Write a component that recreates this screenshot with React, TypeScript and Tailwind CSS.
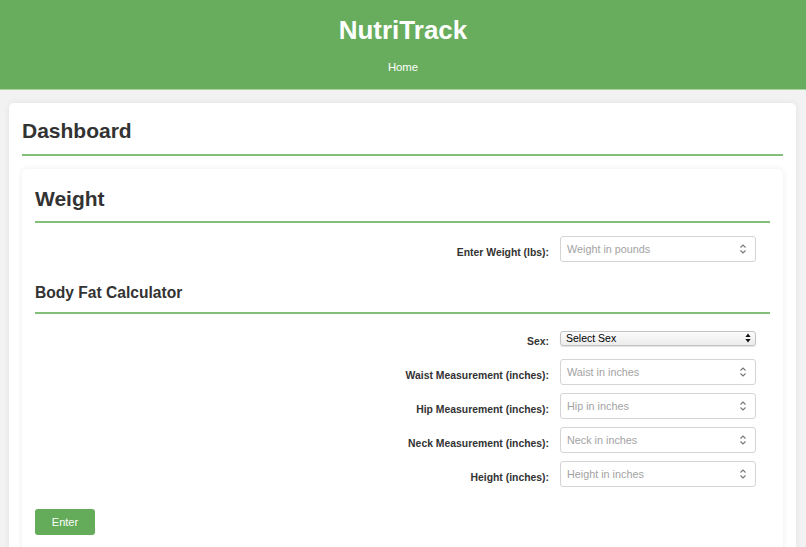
import React from 'react';

const Spinner: React.FC = () => (
    <svg width="8" height="12" viewBox="0 0 8 12" className="shrink-0">
        <path d="M1.5 4.5 L4 2 L6.5 4.5" fill="none" stroke="#777" strokeWidth="1.1" />
        <path d="M1.5 7.5 L4 10 L6.5 7.5" fill="none" stroke="#777" strokeWidth="1.1" />
    </svg>
);

const NumberField: React.FC<{ label: string; placeholder: string }> = ({ label, placeholder }) => (
    <div className="flex justify-end items-center gap-[11px] pr-[14px]">
        <label className="pt-[8px] text-[10.4px] font-bold text-[#333]">{label}</label>
        <div className="w-[196px] h-[26px] flex items-center border border-[#d4d4d4] rounded-[3px] bg-white pl-[6px] pr-[8px]">
            <input
                type="text"
                placeholder={placeholder}
                className="flex-1 min-w-0 bg-transparent outline-none text-[10.8px] text-[#333] placeholder:text-[#a3a3a3]"
            />
            <Spinner />
        </div>
    </div>
);

const SexField: React.FC = () => (
    <div className="flex justify-end items-center gap-[11px] pr-[14px] h-[26px]">
        <label className="pt-[8px] text-[10.4px] font-bold text-[#333]">Sex:</label>
        <div className="w-[196px] h-[15px] flex items-center justify-between border border-[#c3c3c3] rounded-[3px] bg-gradient-to-b from-[#fbfbfb] to-[#ececec] shadow-[0_1px_1px_rgba(0,0,0,0.12)] pl-[5px] pr-[4px]">
            <span className="text-[10.5px] leading-none text-black">Select Sex</span>
            <svg width="6" height="10" viewBox="0 0 6 10">
                <path d="M3 0.5 L5.6 4 H0.4 Z" fill="#111" />
                <path d="M3 9.5 L5.6 6 H0.4 Z" fill="#111" />
            </svg>
        </div>
    </div>
);

const App: React.FC = () => {
    return (
        <div className="min-h-screen bg-[#f2f2f2] font-['Liberation_Sans',Arial,sans-serif]">
            <header className="h-[90px] bg-[#68ad5d] border-b border-[#a8d2a0] text-center text-white">
                <h1 className="pt-[15px] text-[26px] leading-[30px] font-bold">NutriTrack</h1>
                <nav className="mt-[16px] text-[11.3px] leading-[13px]">Home</nav>
            </header>
            <main className="ml-[9px] mr-[10px] mt-[13px] bg-white rounded-[5px] shadow-[0_0_6px_rgba(0,0,0,0.07)] px-[13px] pt-[16px] pb-[20px]">
                <h2 className="text-[21px] leading-[24px] font-bold text-[#333] pb-[11px] border-b-2 border-[#84bf7a]">Dashboard</h2>
                <section className="mt-[13px] rounded-[5px] shadow-[0_0_6px_rgba(0,0,0,0.08)] px-[13px] pt-[18px] pb-[20px]">
                    <h3 className="text-[21px] leading-[24px] font-bold text-[#333] pb-[10px] border-b-2 border-[#84bf7a]">Weight</h3>
                    <div className="mt-[13px]">
                        <NumberField label="Enter Weight (lbs):" placeholder="Weight in pounds" />
                    </div>
                    <h4 className="mt-[22px] text-[15.6px] leading-[18px] font-bold text-[#333] pb-[10px] border-b-2 border-[#84bf7a]">Body Fat Calculator</h4>
                    <div className="mt-[11px] flex flex-col gap-[8px]">
                        <SexField />
                        <NumberField label="Waist Measurement (inches):" placeholder="Waist in inches" />
                        <NumberField label="Hip Measurement (inches):" placeholder="Hip in inches" />
                        <NumberField label="Neck Measurement (inches):" placeholder="Neck in inches" />
                        <NumberField label="Height (inches):" placeholder="Height in inches" />
                    </div>
                    <button type="button" className="mt-[22px] w-[60px] h-[26px] rounded-[3px] bg-[#64ac5a] text-white text-[11px]">Enter</button>
                </section>
            </main>
        </div>
    );
};

export default App;
